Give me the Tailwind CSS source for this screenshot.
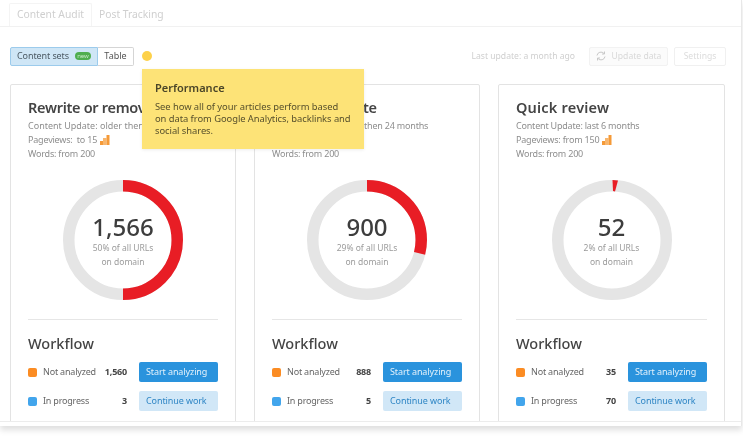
<!DOCTYPE html>
<html lang="en">
  <head>
    <meta charset="UTF-8" />
    <title>Content Audit</title>
    <script src="https://cdn.jsdelivr.net/npm/@tailwindcss/browser@4"></script>
  </head>
  <body class="bg-white overflow-hidden font-['Noto_Sans',sans-serif]">
    <div class="relative w-[743px] h-[443px] overflow-hidden blur-[0.4px]">
      <div class="w-[742px] h-[426px] bg-white border-r border-[#e8e8e8] shadow-[0_4px_6px_rgba(0,0,0,0.13)]">
        <div class="h-[422px] border-b border-[#ececec] overflow-hidden">
          <!-- tabs -->
          <div class="h-[27px] border-b border-[#f1f1f1] flex items-end pl-[9px] text-[10.3px] text-[#cfcfcf]">
            <span class="h-[23px] w-[83px] flex items-center justify-center border border-b-0 border-[#f4f4f4] rounded-t-[2px]">Content Audit</span>
            <span class="h-[23px] flex items-center ml-[7px]">Post Tracking</span>
          </div>

          <!-- toolbar -->
          <div class="flex items-center h-[20px] mt-[19px] pl-[10px] pr-[15px]">
            <div class="flex h-[19px] w-[88px] items-center justify-center gap-[6px] bg-[#cfe6f6] border border-[#9ccbec] rounded-l-[2px] text-[9px] tracking-[-0.1px] text-[#4c5a64]">
              Content sets
              <span class="w-[16px] h-[8px] rounded-full bg-[#4fae4f] flex items-center justify-center text-[6px] leading-none text-[#c9eac9]">new</span>
            </div>
            <div class="flex h-[19px] w-[36px] items-center justify-center border border-l-0 border-[#d5d5d5] rounded-r-[2px] text-[9px] text-[#555]">Table</div>
            <span class="ml-[8px] w-[10px] h-[10px] rounded-full bg-[#fdd14a]"></span>
            <span class="ml-auto mr-[14px] text-[8.6px] text-[#cfcfcf]">Last update: a month ago</span>
            <div class="flex h-[19px] w-[79px] items-center justify-center gap-[6px] bg-[#fbfbfb] border border-[#f2f2f2] rounded-[2px] text-[8.6px] text-[#d8d8d8]">
              <svg width="10" height="10" viewBox="0 0 10 10" fill="none" stroke="#c8c8c8" stroke-width="1"><path d="M1 4.5A4 4 0 0 1 8 2.5M9 5.5A4 4 0 0 1 2 7.5"/><path d="M8.5 0.5V3H6M1.5 9.5V7H4"/></svg>
              Update data
            </div>
            <div class="flex h-[19px] w-[52px] ml-[6px] items-center justify-center border border-[#f0f0f0] rounded-[2px] text-[8.6px] text-[#dcdcdc]">Settings</div>
          </div>

          <!-- cards -->
          <div class="flex gap-[18px] pl-[10px] mt-[18px]">
            <div class="w-[226px] h-[360px] shrink-0 border border-[#e3e3e3] rounded-[2px] px-[17px] pt-[12px]">
              <h2 class="text-[14.5px] tracking-[-0.3px] leading-[20px] font-semibold text-[#444] whitespace-nowrap">Rewrite or remove</h2>
              <div class="mt-[2px] text-[9px] tracking-[-0.2px] leading-[14px] text-[#8e8e8e]">
                <p class="whitespace-nowrap"><span class="tracking-[0px]">Content Update: older then</span> <span class="tracking-[-0.6px]">24 months</span></p>
                <p class="flex items-center gap-[3px]">Pageviews:&nbsp; to 15
                  <svg width="10" height="10" viewBox="0 0 10 10" fill="#f59a38"><rect x="0" y="6" width="3" height="4"/><rect x="3" y="3" width="3.5" height="7" fill="#f8b66d"/><rect x="6.5" y="0" width="3" height="10"/></svg>
                </p>
                <p>Words: from 200</p>
              </div>
              <div class="relative w-[120px] h-[120px] mx-auto mt-[19px]">
                <svg width="120" height="120" viewBox="0 0 120 120" fill="none" class="-rotate-90">
                  <circle cx="60" cy="60" r="54.25" stroke="#e5e5e5" stroke-width="11.5"/>
                  <circle cx="60" cy="60" r="54.25" stroke="#e81d25" stroke-width="11.5" pathLength="100" stroke-dasharray="50 100"/>
                </svg>
                <div class="absolute inset-0 flex flex-col items-center pt-[32px]">
                  <span class="text-[24px] leading-[30px] font-medium text-[#3d3d3d]">1,566</span>
                  <span class="-mt-[1px] text-[8.5px] leading-[14px] text-[#9b9b9b]">50% of all URLs</span>
                  <span class="text-[8.5px] leading-[14px] text-[#9b9b9b]">on domain</span>
                </div>
              </div>
              <div class="border-t border-[#e6e6e6] mt-[19px] pt-[13px]">
                <h3 class="text-[14.5px] leading-[20px] font-medium text-[#444]">Workflow</h3>
                <div class="flex items-center h-[20px] mt-[9px] text-[9px] tracking-[-0.2px] text-[#666]">
                  <span class="w-[9px] h-[9px] rounded-[2px] bg-[#fb8c23] mr-[6px]"></span>
                  <span>Not analyzed</span>
                  <span class="ml-auto mr-[12px] font-bold text-[#444]">1,560</span>
                  <span class="w-[79px] h-[20px] flex items-center pl-[7px] rounded-[2px] bg-[#2a93dd] text-[#e3f1fb] tracking-[-0.1px]">Start analyzing</span>
                </div>
                <div class="flex items-center h-[20px] mt-[9px] text-[9px] tracking-[-0.2px] text-[#666]">
                  <span class="w-[9px] h-[9px] rounded-[2px] bg-[#42a5ec] mr-[6px]"></span>
                  <span>In progress</span>
                  <span class="ml-auto mr-[12px] font-bold text-[#444]">3</span>
                  <span class="w-[79px] h-[20px] flex items-center pl-[7px] rounded-[2px] bg-[#d1e7f7] text-[#2f86c5] tracking-[-0.1px]">Continue work</span>
                </div>
              </div>
            </div>

            <div class="w-[226px] h-[360px] shrink-0 border border-[#e3e3e3] rounded-[2px] px-[17px] pt-[12px]">
              <h2 class="text-[14.5px] tracking-[-0.4px] leading-[20px] font-semibold text-[#444] whitespace-nowrap">Need to update</h2>
              <div class="mt-[2px] text-[9px] tracking-[-0.2px] leading-[14px] text-[#8e8e8e]">
                <p class="whitespace-nowrap">Content Update: older then 24 months</p>
                <p>Pageviews:&nbsp; to 15</p>
                <p>Words: from 200</p>
              </div>
              <div class="relative w-[120px] h-[120px] mx-auto mt-[19px]">
                <svg width="120" height="120" viewBox="0 0 120 120" fill="none" class="-rotate-90">
                  <circle cx="60" cy="60" r="54.25" stroke="#e5e5e5" stroke-width="11.5"/>
                  <circle cx="60" cy="60" r="54.25" stroke="#e81d25" stroke-width="11.5" pathLength="100" stroke-dasharray="29 100"/>
                </svg>
                <div class="absolute inset-0 flex flex-col items-center pt-[32px]">
                  <span class="text-[24px] leading-[30px] font-medium text-[#3d3d3d]">900</span>
                  <span class="-mt-[1px] text-[8.5px] leading-[14px] text-[#9b9b9b]">29% of all URLs</span>
                  <span class="text-[8.5px] leading-[14px] text-[#9b9b9b]">on domain</span>
                </div>
              </div>
              <div class="border-t border-[#e6e6e6] mt-[19px] pt-[13px]">
                <h3 class="text-[14.5px] leading-[20px] font-medium text-[#444]">Workflow</h3>
                <div class="flex items-center h-[20px] mt-[9px] text-[9px] tracking-[-0.2px] text-[#666]">
                  <span class="w-[9px] h-[9px] rounded-[2px] bg-[#fb8c23] mr-[6px]"></span>
                  <span>Not analyzed</span>
                  <span class="ml-auto mr-[12px] font-bold text-[#444]">888</span>
                  <span class="w-[79px] h-[20px] flex items-center pl-[7px] rounded-[2px] bg-[#2a93dd] text-[#e3f1fb] tracking-[-0.1px]">Start analyzing</span>
                </div>
                <div class="flex items-center h-[20px] mt-[9px] text-[9px] tracking-[-0.2px] text-[#666]">
                  <span class="w-[9px] h-[9px] rounded-[2px] bg-[#42a5ec] mr-[6px]"></span>
                  <span>In progress</span>
                  <span class="ml-auto mr-[12px] font-bold text-[#444]">5</span>
                  <span class="w-[79px] h-[20px] flex items-center pl-[7px] rounded-[2px] bg-[#d1e7f7] text-[#2f86c5] tracking-[-0.1px]">Continue work</span>
                </div>
              </div>
            </div>

            <div class="w-[227px] h-[360px] shrink-0 border border-[#e3e3e3] rounded-[2px] px-[17px] pt-[12px]">
              <h2 class="text-[14.5px] tracking-[0.2px] leading-[20px] font-semibold text-[#444] whitespace-nowrap">Quick review</h2>
              <div class="mt-[2px] text-[9px] tracking-[-0.2px] leading-[14px] text-[#8e8e8e]">
                <p class="whitespace-nowrap">Content Update: last 6 months</p>
                <p class="flex items-center gap-[3px]">Pageviews: from 150
                  <svg width="10" height="10" viewBox="0 0 10 10" fill="#f59a38"><rect x="0" y="6" width="3" height="4"/><rect x="3" y="3" width="3.5" height="7" fill="#f8b66d"/><rect x="6.5" y="0" width="3" height="10"/></svg>
                </p>
                <p>Words: from 200</p>
              </div>
              <div class="relative w-[120px] h-[120px] mx-auto mt-[19px]">
                <svg width="120" height="120" viewBox="0 0 120 120" fill="none">
                  <circle cx="60" cy="60" r="54.25" stroke="#e5e5e5" stroke-width="11.5"/>
                  <path d="M60.5 0L66 0.5L63 11.5L61 11Z" fill="#e81d25"/>
                </svg>
                <div class="absolute inset-0 flex flex-col items-center pt-[32px]">
                  <span class="text-[24px] leading-[30px] font-medium text-[#3d3d3d]">52</span>
                  <span class="-mt-[1px] text-[8.5px] leading-[14px] text-[#9b9b9b]">2% of all URLs</span>
                  <span class="text-[8.5px] leading-[14px] text-[#9b9b9b]">on domain</span>
                </div>
              </div>
              <div class="border-t border-[#e6e6e6] mt-[19px] pt-[13px]">
                <h3 class="text-[14.5px] leading-[20px] font-medium text-[#444]">Workflow</h3>
                <div class="flex items-center h-[20px] mt-[9px] text-[9px] tracking-[-0.2px] text-[#666]">
                  <span class="w-[9px] h-[9px] rounded-[2px] bg-[#fb8c23] mr-[6px]"></span>
                  <span>Not analyzed</span>
                  <span class="ml-auto mr-[12px] font-bold text-[#444]">35</span>
                  <span class="w-[79px] h-[20px] flex items-center pl-[7px] rounded-[2px] bg-[#2a93dd] text-[#e3f1fb] tracking-[-0.1px]">Start analyzing</span>
                </div>
                <div class="flex items-center h-[20px] mt-[9px] text-[9px] tracking-[-0.2px] text-[#666]">
                  <span class="w-[9px] h-[9px] rounded-[2px] bg-[#42a5ec] mr-[6px]"></span>
                  <span>In progress</span>
                  <span class="ml-auto mr-[12px] font-bold text-[#444]">70</span>
                  <span class="w-[79px] h-[20px] flex items-center pl-[7px] rounded-[2px] bg-[#d1e7f7] text-[#2f86c5] tracking-[-0.1px]">Continue work</span>
                </div>
              </div>
            </div>
          </div>
        </div>
      </div>

      <!-- tooltip -->
      <div class="absolute left-[142px] top-[69px] w-[222px] h-[80px] bg-[#fde377] pl-[13px] pt-[12px] shadow-[0_1px_3px_rgba(0,0,0,0.08)]">
        <p class="text-[11px] leading-[14px] font-semibold text-[#4a4528]">Performance</p>
        <p class="mt-[6px] text-[9.4px] tracking-[-0.05px] leading-[12px] text-[#57502c] whitespace-nowrap">See how all of your articles perform based<br />on data from Google Analytics, backlinks and<br />social shares.</p>
      </div>
    </div>
  </body>
</html>
